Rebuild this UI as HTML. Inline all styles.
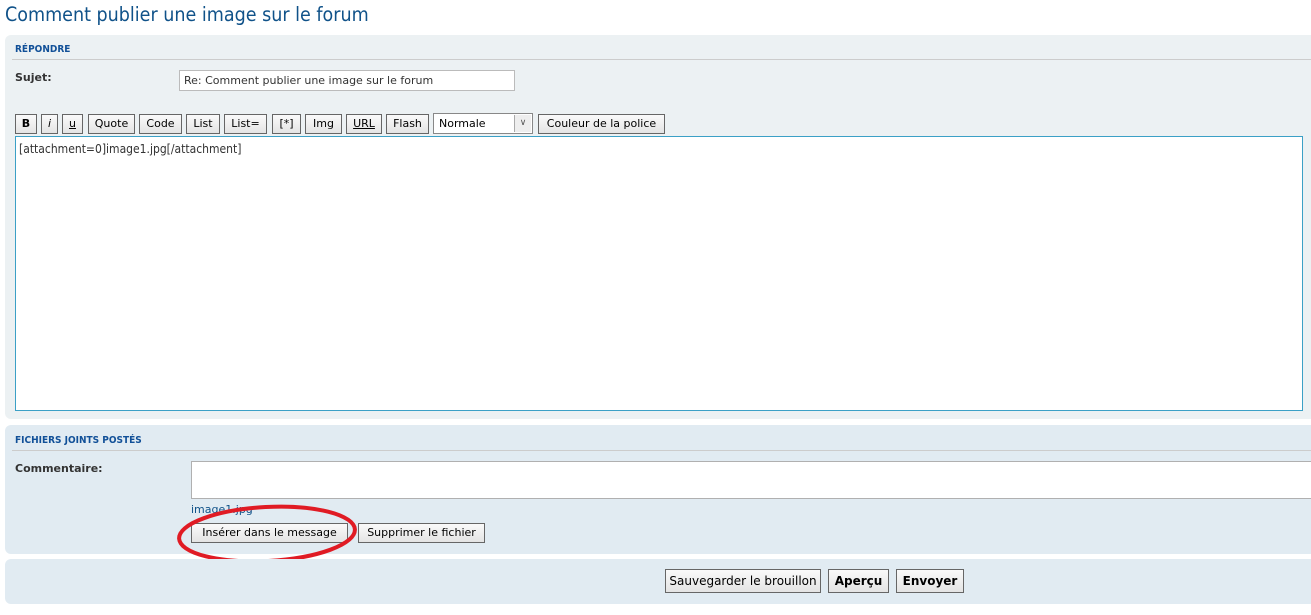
<!DOCTYPE html>
<html><head><meta charset="utf-8"><style>
body{margin:0;width:1311px;height:615px;background:#fff;position:relative;overflow:hidden;font-family:"DejaVu Sans","Liberation Sans",sans-serif;}
.a{position:absolute;}
.btn{position:absolute;height:18px;border:1px solid #666;background:linear-gradient(#fafafa,#e4e4e4);font-size:11px;line-height:18px;text-align:center;color:#000;box-sizing:content-box;}
.h{font-family:"DejaVu Sans Condensed","DejaVu Sans",sans-serif;font-size:10px;color:#115098;font-weight:bold;}
</style></head><body>
<div class="a" style="left:5px;top:3px;font-size:19.5px;color:#105289;font-family:'DejaVu Sans Condensed','DejaVu Sans',sans-serif;">Comment publier une image sur le forum</div>

<div class="a" style="left:5px;top:35px;width:1320px;height:384px;background:#ECF1F3;border-radius:6px;"></div>
<div class="a h" style="left:15px;top:44px;">RÉPONDRE</div>
<div class="a" style="left:12px;top:59px;width:1300px;height:1px;background:#ccc;"></div>
<div class="a" style="left:15px;top:71px;font-size:11px;font-weight:bold;color:#333;">Sujet:</div>
<div class="a" style="left:179px;top:70px;background:#fff;border:1px solid #bbb;font-size:11px;line-height:19px;padding-left:4px;box-sizing:border-box;width:336px;height:21px;color:#333;">Re: Comment publier une image sur le forum</div>

<div class="btn" style="left:15px;top:114px;width:20px;font-weight:bold;">B</div>
<div class="btn" style="left:41px;top:114px;width:15px;font-style:italic;">i</div>
<div class="btn" style="left:62px;top:114px;width:19px;text-decoration:underline;">u</div>
<div class="btn" style="left:88px;top:114px;width:45px;">Quote</div>
<div class="btn" style="left:139px;top:114px;width:41px;">Code</div>
<div class="btn" style="left:186px;top:114px;width:32px;">List</div>
<div class="btn" style="left:224px;top:114px;width:41px;">List=</div>
<div class="btn" style="left:272px;top:114px;width:27px;">[*]</div>
<div class="btn" style="left:305px;top:114px;width:35px;">Img</div>
<div class="btn" style="left:346px;top:114px;width:34px;text-decoration:underline;">URL</div>
<div class="btn" style="left:386px;top:114px;width:41px;">Flash</div>
<div class="a" style="left:433px;top:113px;height:19px;border:1px solid #888;background:#fff;font-size:11px;line-height:19px;padding-left:5px;box-sizing:content-box;width:93px;">Normale</div>
<div class="a" style="left:514px;top:115px;width:16px;height:17px;border-left:1px solid #aaa;background:#eee;font-size:9px;text-align:center;line-height:17px;color:#555;">&#8744;</div>
<div class="btn" style="left:538px;top:114px;width:125px;">Couleur de la police</div>

<div class="a" style="left:15px;top:136px;width:1286px;height:273px;background:#fff;border:1px solid #3ba0c6;"></div>
<div class="a" style="left:19px;top:142px;font-size:12px;color:#333;font-family:'DejaVu Sans Condensed','DejaVu Sans',sans-serif;">[attachment=0]image1.jpg[/attachment]</div>

<div class="a" style="left:5px;top:425px;width:1320px;height:129px;background:#E1EBF2;border-radius:6px;"></div>
<div class="a h" style="left:15px;top:435px;">FICHIERS JOINTS POSTÉS</div>
<div class="a" style="left:12px;top:450px;width:1300px;height:1px;background:#ccc;"></div>
<div class="a" style="left:15px;top:462px;font-size:11px;font-weight:bold;color:#333;">Commentaire:</div>
<div class="a" style="left:191px;top:461px;width:1130px;height:36px;background:#fff;border:1px solid #b0b0b0;"></div>
<div class="a" style="left:191px;top:503px;font-size:11px;color:#105289;">image1.jpg</div>
<div class="btn" style="left:191px;top:523px;width:155px;">Insérer dans le message</div>
<div class="btn" style="left:358px;top:523px;width:125px;">Supprimer le fichier</div>
<svg class="a" style="left:170px;top:500px" width="200" height="70"><ellipse cx="97" cy="34" rx="88" ry="27" fill="none" stroke="#e01b24" stroke-width="4" transform="rotate(-3 97 34)"/></svg>

<div class="a" style="left:5px;top:559px;width:1320px;height:45px;background:#E1EBF2;border-radius:6px;"></div>
<div class="btn" style="left:665px;top:569px;width:154px;height:22px;line-height:22px;font-size:12px;">Sauvegarder le brouillon</div>
<div class="btn" style="left:828px;top:569px;width:59px;height:22px;line-height:22px;font-size:12px;font-weight:bold;">Aperçu</div>
<div class="btn" style="left:896px;top:569px;width:66px;height:22px;line-height:22px;font-size:12px;font-weight:bold;">Envoyer</div>
</body></html>
